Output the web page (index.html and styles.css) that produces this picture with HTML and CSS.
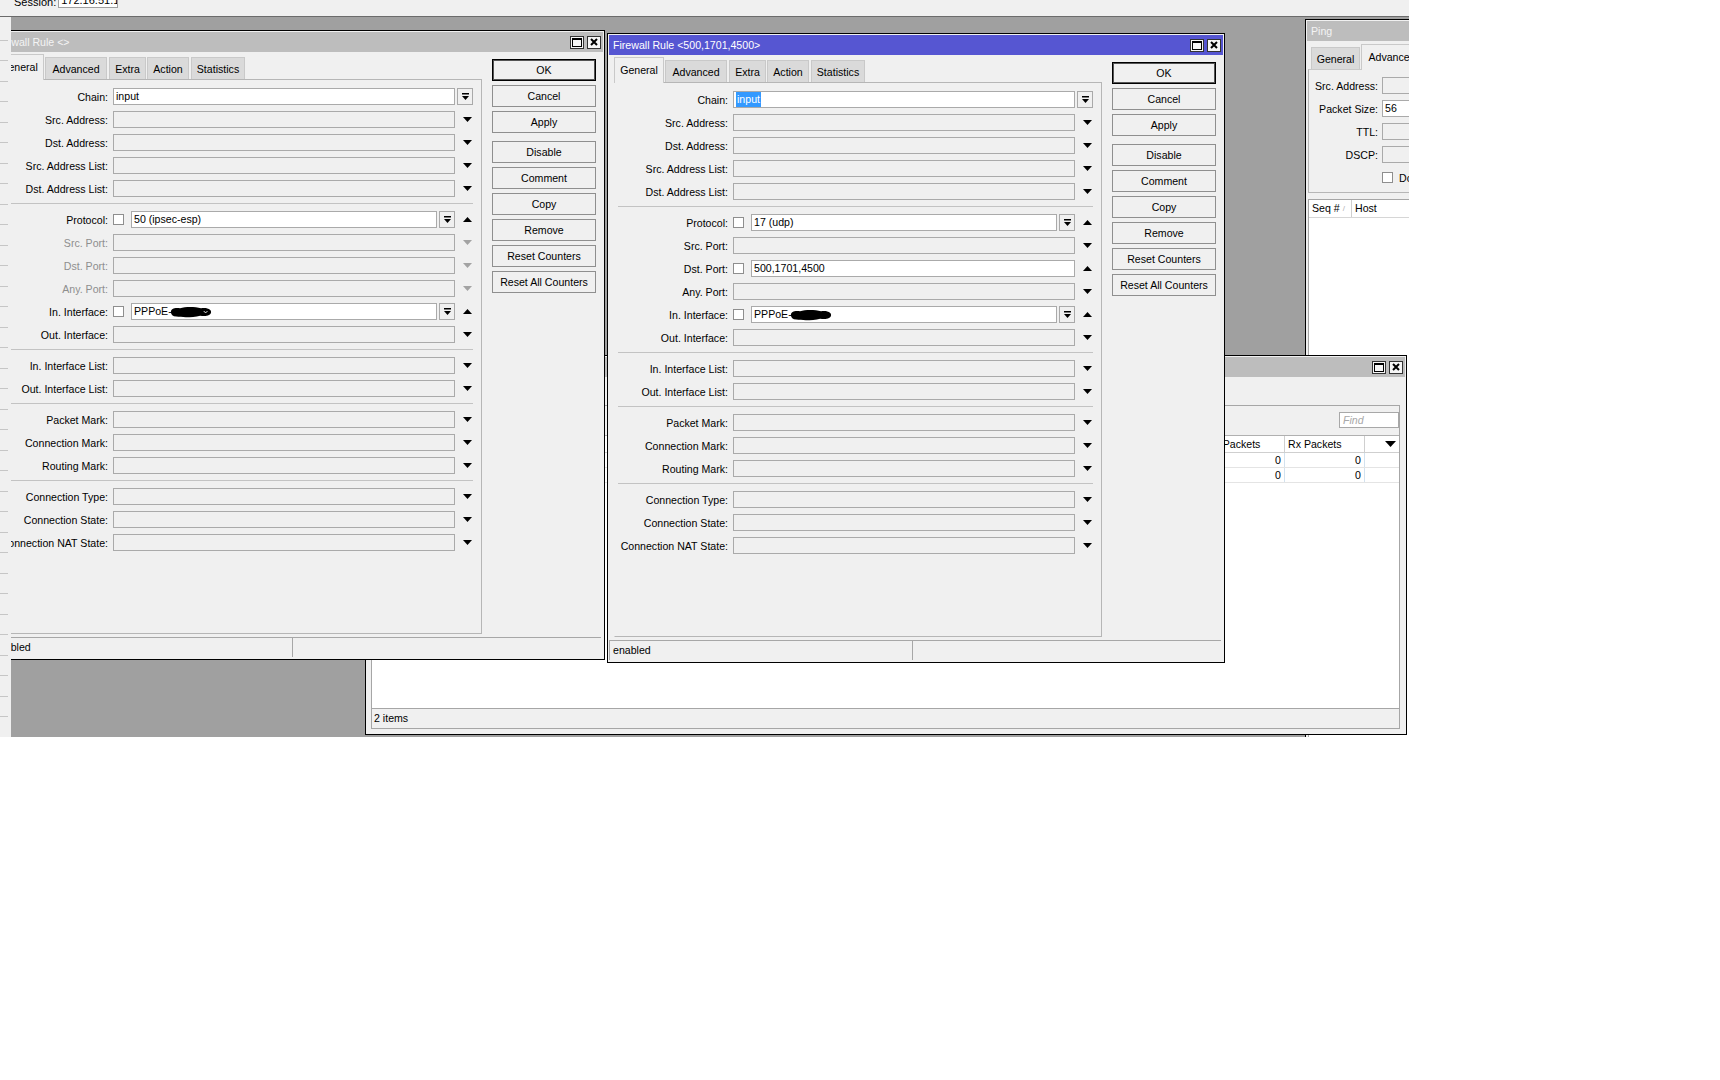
FILE: index.html
```html
<!DOCTYPE html>
<html>
<head>
<meta charset="utf-8">
<title>WinBox</title>
<link rel="stylesheet" href="styles.css">
</head>
<body>
<div class="screen">
  <div class="topbar">
    <div class="session"><span class="sess-lbl">Session:</span><span class="sess-box">172.16.51.1</span></div>
  </div>
  <div class="main">
    <div class="sidebar"></div>
    <div class="desktop">

      <!-- Ping window -->
      <div class="win ping">
        <div class="titlebar"><span class="tb-title">Ping</span></div>
        <div class="ping-body">
          <div class="ptabs">
            <div class="tab t-pgen">General</div>
            <div class="tab sel t-padv">Advanced</div>
          </div>
          <div class="ppanel">
            <div class="row"><span class="plbl">Src. Address:</span><div class="pinp"></div></div>
            <div class="row"><span class="plbl">Packet Size:</span><div class="pinp val">56</div></div>
            <div class="row"><span class="plbl">TTL:</span><div class="pinp"></div></div>
            <div class="row"><span class="plbl">DSCP:</span><div class="pinp"></div></div>
            <div class="row"><span class="plbl"></span><span class="cb pcb"></span><span>Don't Fragment</span></div>
          </div>
          <div class="plist">
            <div class="phead"><span class="th">Seq # <span class="sort">/</span></span><span class="th">Host</span><span class="th"></span></div>
          </div>
        </div>
      </div>

      <!-- List window (behind) -->
      <div class="win list">
        <div class="titlebar"><span class="tb-title">Firewall</span>
          <span class="tb-btns">
            <span class="tb-btn"><svg width="10" height="9" viewBox="0 0 10 9"><rect x="0.5" y="0.5" width="9" height="8" fill="none" stroke="#000"/><rect x="0" y="0" width="10" height="2"/></svg></span>
            <span class="tb-btn"><svg width="8" height="8" viewBox="0 0 8 8"><path d="M1 1L7 7M7 1L1 7" stroke="#000" stroke-width="2"/></svg></span>
          </span>
        </div>
        <div class="list-body">
          <div class="toolbar"></div>
          <div class="lpanel">
            <div class="findrow"><div class="find">Find</div></div>
            <div class="table">
              <div class="thead">
                <span class="th">#</span><span class="th">Tx Packets</span><span class="th">Rx Packets</span>
                <span class="th th-last"><svg class="ar" width="11" height="6" viewBox="0 0 11 6"><path d="M0 0H11L5.5 6Z"/></svg></span>
              </div>
              <div class="tr"><span class="td"></span><span class="td">0</span><span class="td">0</span><span class="td"></span></div>
              <div class="tr"><span class="td"></span><span class="td">0</span><span class="td">0</span><span class="td"></span></div>
            </div>
            <div class="lstatus">2 items</div>
          </div>
        </div>
      </div>

      <!-- Left firewall rule window (inactive) -->
      <div class="win fw fw-left">
        <div class="titlebar"><span class="tb-title">Firewall Rule &lt;&gt;</span>
          <span class="tb-btns">
            <span class="tb-btn"><svg width="10" height="9" viewBox="0 0 10 9"><rect x="0.5" y="0.5" width="9" height="8" fill="none" stroke="#000"/><rect x="0" y="0" width="10" height="2"/></svg></span>
            <span class="tb-btn"><svg width="8" height="8" viewBox="0 0 8 8"><path d="M1 1L7 7M7 1L1 7" stroke="#000" stroke-width="2"/></svg></span>
          </span>
        </div>
        <div class="fw-body">
          <div class="fw-main">
            <div class="tabs">
              <div class="tab sel t-gen">General</div>
              <div class="tab t-adv">Advanced</div>
              <div class="tab t-ext">Extra</div>
              <div class="tab t-act">Action</div>
              <div class="tab t-sta">Statistics</div>
            </div>
            <div class="panel">
              <div class="row"><span class="lbl">Chain:</span><div class="ctl"><div class="inp val">input</div></div><div class="side bs"><span class="dd"><svg width="9" height="9" viewBox="0 0 9 9"><path d="M1 1H8V2.5H1Z M1 4H8L4.5 8Z"/></svg></span></div></div>
              <div class="row"><span class="lbl">Src. Address:</span><div class="ctl"><div class="inp"></div></div><div class="side"><svg class="ar" width="9" height="5" viewBox="0 0 9 5"><path d="M0 0H9L4.5 5Z"/></svg></div></div>
              <div class="row"><span class="lbl">Dst. Address:</span><div class="ctl"><div class="inp"></div></div><div class="side"><svg class="ar" width="9" height="5" viewBox="0 0 9 5"><path d="M0 0H9L4.5 5Z"/></svg></div></div>
              <div class="row"><span class="lbl">Src. Address List:</span><div class="ctl"><div class="inp"></div></div><div class="side"><svg class="ar" width="9" height="5" viewBox="0 0 9 5"><path d="M0 0H9L4.5 5Z"/></svg></div></div>
              <div class="row"><span class="lbl">Dst. Address List:</span><div class="ctl"><div class="inp"></div></div><div class="side"><svg class="ar" width="9" height="5" viewBox="0 0 9 5"><path d="M0 0H9L4.5 5Z"/></svg></div></div>
              <div class="sep"></div>
              <div class="row"><span class="lbl">Protocol:</span><div class="ctl"><span class="cb"></span><div class="inp val">50 (ipsec-esp)</div><span class="dd"><svg width="9" height="9" viewBox="0 0 9 9"><path d="M1 1H8V2.5H1Z M1 4H8L4.5 8Z"/></svg></span></div><div class="side"><svg class="ar" width="9" height="5" viewBox="0 0 9 5"><path d="M0 5H9L4.5 0Z"/></svg></div></div>
              <div class="row"><span class="lbl dis">Src. Port:</span><div class="ctl"><div class="inp"></div></div><div class="side"><svg class="ar dis" width="9" height="5" viewBox="0 0 9 5"><path d="M0 0H9L4.5 5Z"/></svg></div></div>
              <div class="row"><span class="lbl dis">Dst. Port:</span><div class="ctl"><div class="inp"></div></div><div class="side"><svg class="ar dis" width="9" height="5" viewBox="0 0 9 5"><path d="M0 0H9L4.5 5Z"/></svg></div></div>
              <div class="row"><span class="lbl dis">Any. Port:</span><div class="ctl"><div class="inp"></div></div><div class="side"><svg class="ar dis" width="9" height="5" viewBox="0 0 9 5"><path d="M0 0H9L4.5 5Z"/></svg></div></div>
              <div class="row"><span class="lbl">In. Interface:</span><div class="ctl"><span class="cb"></span><div class="inp val">PPPoE-<svg class="blob" width="42" height="14" viewBox="0 0 46 14"><path d="M1 7C1 3 6 2 11 3C17 1 27 1 34 3C40 2 45 4 45 7C45 11 39 12 33 11C25 13 14 13 7 12C3 12 1 10 1 7Z"/><path d="M37 6L39 8L41 6" stroke="#fff" stroke-width="1" fill="none"/></svg></div><span class="dd"><svg width="9" height="9" viewBox="0 0 9 9"><path d="M1 1H8V2.5H1Z M1 4H8L4.5 8Z"/></svg></span></div><div class="side"><svg class="ar" width="9" height="5" viewBox="0 0 9 5"><path d="M0 5H9L4.5 0Z"/></svg></div></div>
              <div class="row"><span class="lbl">Out. Interface:</span><div class="ctl"><div class="inp"></div></div><div class="side"><svg class="ar" width="9" height="5" viewBox="0 0 9 5"><path d="M0 0H9L4.5 5Z"/></svg></div></div>
              <div class="sep"></div>
              <div class="row"><span class="lbl">In. Interface List:</span><div class="ctl"><div class="inp"></div></div><div class="side"><svg class="ar" width="9" height="5" viewBox="0 0 9 5"><path d="M0 0H9L4.5 5Z"/></svg></div></div>
              <div class="row"><span class="lbl">Out. Interface List:</span><div class="ctl"><div class="inp"></div></div><div class="side"><svg class="ar" width="9" height="5" viewBox="0 0 9 5"><path d="M0 0H9L4.5 5Z"/></svg></div></div>
              <div class="sep"></div>
              <div class="row"><span class="lbl">Packet Mark:</span><div class="ctl"><div class="inp"></div></div><div class="side"><svg class="ar" width="9" height="5" viewBox="0 0 9 5"><path d="M0 0H9L4.5 5Z"/></svg></div></div>
              <div class="row"><span class="lbl">Connection Mark:</span><div class="ctl"><div class="inp"></div></div><div class="side"><svg class="ar" width="9" height="5" viewBox="0 0 9 5"><path d="M0 0H9L4.5 5Z"/></svg></div></div>
              <div class="row"><span class="lbl">Routing Mark:</span><div class="ctl"><div class="inp"></div></div><div class="side"><svg class="ar" width="9" height="5" viewBox="0 0 9 5"><path d="M0 0H9L4.5 5Z"/></svg></div></div>
              <div class="sep"></div>
              <div class="row"><span class="lbl">Connection Type:</span><div class="ctl"><div class="inp"></div></div><div class="side"><svg class="ar" width="9" height="5" viewBox="0 0 9 5"><path d="M0 0H9L4.5 5Z"/></svg></div></div>
              <div class="row"><span class="lbl">Connection State:</span><div class="ctl"><div class="inp"></div></div><div class="side"><svg class="ar" width="9" height="5" viewBox="0 0 9 5"><path d="M0 0H9L4.5 5Z"/></svg></div></div>
              <div class="row"><span class="lbl">Connection NAT State:</span><div class="ctl"><div class="inp"></div></div><div class="side"><svg class="ar" width="9" height="5" viewBox="0 0 9 5"><path d="M0 0H9L4.5 5Z"/></svg></div></div>
            </div>
          </div>
          <div class="fw-side">
            <div class="btn def">OK</div>
            <div class="btn">Cancel</div>
            <div class="btn">Apply</div>
            <div class="btn gap">Disable</div>
            <div class="btn">Comment</div>
            <div class="btn">Copy</div>
            <div class="btn">Remove</div>
            <div class="btn">Reset Counters</div>
            <div class="btn">Reset All Counters</div>
          </div>
        </div>
        <div class="status"><span class="seg seg1">enabled</span><span class="seg seg2"></span></div>
      </div>

      <!-- Right firewall rule window (active) -->
      <div class="win fw fw-right active">
        <div class="titlebar"><span class="tb-title">Firewall Rule &lt;500,1701,4500&gt;</span>
          <span class="tb-btns">
            <span class="tb-btn"><svg width="10" height="9" viewBox="0 0 10 9"><rect x="0.5" y="0.5" width="9" height="8" fill="none" stroke="#000"/><rect x="0" y="0" width="10" height="2"/></svg></span>
            <span class="tb-btn"><svg width="8" height="8" viewBox="0 0 8 8"><path d="M1 1L7 7M7 1L1 7" stroke="#000" stroke-width="2"/></svg></span>
          </span>
        </div>
        <div class="fw-body">
          <div class="fw-main">
            <div class="tabs">
              <div class="tab sel t-gen">General</div>
              <div class="tab t-adv">Advanced</div>
              <div class="tab t-ext">Extra</div>
              <div class="tab t-act">Action</div>
              <div class="tab t-sta">Statistics</div>
            </div>
            <div class="panel">
              <div class="row"><span class="lbl">Chain:</span><div class="ctl"><div class="inp val"><span class="hl">input</span></div></div><div class="side bs"><span class="dd"><svg width="9" height="9" viewBox="0 0 9 9"><path d="M1 1H8V2.5H1Z M1 4H8L4.5 8Z"/></svg></span></div></div>
              <div class="row"><span class="lbl">Src. Address:</span><div class="ctl"><div class="inp"></div></div><div class="side"><svg class="ar" width="9" height="5" viewBox="0 0 9 5"><path d="M0 0H9L4.5 5Z"/></svg></div></div>
              <div class="row"><span class="lbl">Dst. Address:</span><div class="ctl"><div class="inp"></div></div><div class="side"><svg class="ar" width="9" height="5" viewBox="0 0 9 5"><path d="M0 0H9L4.5 5Z"/></svg></div></div>
              <div class="row"><span class="lbl">Src. Address List:</span><div class="ctl"><div class="inp"></div></div><div class="side"><svg class="ar" width="9" height="5" viewBox="0 0 9 5"><path d="M0 0H9L4.5 5Z"/></svg></div></div>
              <div class="row"><span class="lbl">Dst. Address List:</span><div class="ctl"><div class="inp"></div></div><div class="side"><svg class="ar" width="9" height="5" viewBox="0 0 9 5"><path d="M0 0H9L4.5 5Z"/></svg></div></div>
              <div class="sep"></div>
              <div class="row"><span class="lbl">Protocol:</span><div class="ctl"><span class="cb"></span><div class="inp val">17 (udp)</div><span class="dd"><svg width="9" height="9" viewBox="0 0 9 9"><path d="M1 1H8V2.5H1Z M1 4H8L4.5 8Z"/></svg></span></div><div class="side"><svg class="ar" width="9" height="5" viewBox="0 0 9 5"><path d="M0 5H9L4.5 0Z"/></svg></div></div>
              <div class="row"><span class="lbl">Src. Port:</span><div class="ctl"><div class="inp"></div></div><div class="side"><svg class="ar" width="9" height="5" viewBox="0 0 9 5"><path d="M0 0H9L4.5 5Z"/></svg></div></div>
              <div class="row"><span class="lbl">Dst. Port:</span><div class="ctl"><span class="cb"></span><div class="inp val">500,1701,4500</div></div><div class="side"><svg class="ar" width="9" height="5" viewBox="0 0 9 5"><path d="M0 5H9L4.5 0Z"/></svg></div></div>
              <div class="row"><span class="lbl">Any. Port:</span><div class="ctl"><div class="inp"></div></div><div class="side"><svg class="ar" width="9" height="5" viewBox="0 0 9 5"><path d="M0 0H9L4.5 5Z"/></svg></div></div>
              <div class="row"><span class="lbl">In. Interface:</span><div class="ctl"><span class="cb"></span><div class="inp val">PPPoE-<svg class="blob" width="42" height="14" viewBox="0 0 46 14"><path d="M1 7C1 3 6 2 11 3C17 1 27 1 34 3C40 2 45 4 45 7C45 11 39 12 33 11C25 13 14 13 7 12C3 12 1 10 1 7Z"/></svg></div><span class="dd"><svg width="9" height="9" viewBox="0 0 9 9"><path d="M1 1H8V2.5H1Z M1 4H8L4.5 8Z"/></svg></span></div><div class="side"><svg class="ar" width="9" height="5" viewBox="0 0 9 5"><path d="M0 5H9L4.5 0Z"/></svg></div></div>
              <div class="row"><span class="lbl">Out. Interface:</span><div class="ctl"><div class="inp"></div></div><div class="side"><svg class="ar" width="9" height="5" viewBox="0 0 9 5"><path d="M0 0H9L4.5 5Z"/></svg></div></div>
              <div class="sep"></div>
              <div class="row"><span class="lbl">In. Interface List:</span><div class="ctl"><div class="inp"></div></div><div class="side"><svg class="ar" width="9" height="5" viewBox="0 0 9 5"><path d="M0 0H9L4.5 5Z"/></svg></div></div>
              <div class="row"><span class="lbl">Out. Interface List:</span><div class="ctl"><div class="inp"></div></div><div class="side"><svg class="ar" width="9" height="5" viewBox="0 0 9 5"><path d="M0 0H9L4.5 5Z"/></svg></div></div>
              <div class="sep"></div>
              <div class="row"><span class="lbl">Packet Mark:</span><div class="ctl"><div class="inp"></div></div><div class="side"><svg class="ar" width="9" height="5" viewBox="0 0 9 5"><path d="M0 0H9L4.5 5Z"/></svg></div></div>
              <div class="row"><span class="lbl">Connection Mark:</span><div class="ctl"><div class="inp"></div></div><div class="side"><svg class="ar" width="9" height="5" viewBox="0 0 9 5"><path d="M0 0H9L4.5 5Z"/></svg></div></div>
              <div class="row"><span class="lbl">Routing Mark:</span><div class="ctl"><div class="inp"></div></div><div class="side"><svg class="ar" width="9" height="5" viewBox="0 0 9 5"><path d="M0 0H9L4.5 5Z"/></svg></div></div>
              <div class="sep"></div>
              <div class="row"><span class="lbl">Connection Type:</span><div class="ctl"><div class="inp"></div></div><div class="side"><svg class="ar" width="9" height="5" viewBox="0 0 9 5"><path d="M0 0H9L4.5 5Z"/></svg></div></div>
              <div class="row"><span class="lbl">Connection State:</span><div class="ctl"><div class="inp"></div></div><div class="side"><svg class="ar" width="9" height="5" viewBox="0 0 9 5"><path d="M0 0H9L4.5 5Z"/></svg></div></div>
              <div class="row"><span class="lbl">Connection NAT State:</span><div class="ctl"><div class="inp"></div></div><div class="side"><svg class="ar" width="9" height="5" viewBox="0 0 9 5"><path d="M0 0H9L4.5 5Z"/></svg></div></div>
            </div>
          </div>
          <div class="fw-side">
            <div class="btn def">OK</div>
            <div class="btn">Cancel</div>
            <div class="btn">Apply</div>
            <div class="btn gap">Disable</div>
            <div class="btn">Comment</div>
            <div class="btn">Copy</div>
            <div class="btn">Remove</div>
            <div class="btn">Reset Counters</div>
            <div class="btn">Reset All Counters</div>
          </div>
        </div>
        <div class="status"><span class="seg seg1">enabled</span><span class="seg seg2"></span></div>
      </div>

    </div>
  </div>
</div>
</body>
</html>
```
FILE: styles.css
```css
* { box-sizing: border-box; }
html, body { margin: 0; padding: 0; background: #fff; }
body {
  font-family: "Liberation Sans", Arial, sans-serif;
  font-size: 10.6px;
  color: #000;
}

.screen {
  width: 1409px;
  height: 737px;
  display: flex;
  flex-direction: column;
  overflow: hidden;
  background: #f0f0f0;
}

/* top session bar */
.topbar {
  flex: none;
  height: 17px;
  border-bottom: 1px solid #6b6b6b;
  background: #f0f0f0;
  display: flex;
  align-items: flex-end;
  padding: 0 0 8px 14px;
}
.session { display: flex; align-items: flex-end; }
.sess-lbl { font-size: 11px; line-height: 12px; margin-right: 2px; }
.sess-box {
  width: 60px;
  height: 17px;
  border: 1px solid #a0a0a0;
  background: #fff;
  padding: 2px 0 0 2px;
  line-height: 13px;
  font-size: 11px;
  white-space: nowrap;
  overflow: hidden;
}

.main { flex: none; height: 720px; display: flex; }
.sidebar {
  width: 11px;
  flex: none;
  background-color: #f0f0f0;
  background-image: repeating-linear-gradient(to bottom, transparent 0, transparent 19.5px, #c6c6c6 19.5px, #c6c6c6 20.5px);
  background-size: 8px 100%;
  background-repeat: no-repeat;
  background-position: 0 3px;
}
.desktop {
  flex: 1;
  position: relative;
  overflow: hidden;
  background: #a0a0a0;
}

/* generic window */
.win {
  position: absolute;
  display: flex;
  flex-direction: column;
  background: #f0f0f0;
  border: 1px solid #000;
  padding: 1px;
}
.titlebar {
  flex: none;
  height: 20px;
  display: flex;
  align-items: center;
  padding-left: 4px;
  background: #bdbdbd;
  color: #f4f4f4;
  white-space: nowrap;
  overflow: hidden;
}
.active .titlebar { background: #5656d2; color: #fff; }
.tb-title { flex: 1; }
.tb-btns { display: flex; gap: 3px; margin-right: 2px; }
.tb-btn {
  width: 14px;
  height: 13px;
  border: 1px solid #333;
  background: #f6f6f6;
  display: flex;
  align-items: center;
  justify-content: center;
}

/* firewall rule windows */
.fw { width: 618px; height: 630px; }
.fw-left { left: -24px; top: 13px; z-index: 3; }
.fw-right { left: 596px; top: 16px; z-index: 4; }

.fw-body { flex: 1; min-height: 0; display: flex; padding: 2px 0 0 5px; }
.fw-main { width: 488px; display: flex; flex-direction: column; }

.tabs {
  flex: none;
  height: 25px;
  display: flex;
  align-items: flex-end;
  position: relative;
  z-index: 1;
}
.tab {
  flex: none;
  height: 22px;
  margin-right: 1px;
  background: #dadada;
  border: 1px solid #c9c9c9;
  border-bottom: none;
  display: flex;
  align-items: center;
  justify-content: center;
  white-space: nowrap;
}
.tab.sel {
  height: 26px;
  margin-bottom: -1px;
  background: #f0f0f0;
  padding-bottom: 1px;
}
.t-gen { width: 50px; }
.t-adv { width: 62px; }
.t-ext { width: 37px; margin-left: 1px; }
.t-act { width: 42px; }
.t-sta { width: 54px; margin-left: 1px; }

.panel {
  flex: 1;
  border: 1px solid #b6b6b6;
  border-left-color: #f0f0f0;
  padding-top: 8px;
}

.row {
  display: flex;
  align-items: center;
  height: 17px;
  margin-bottom: 6px;
  white-space: nowrap;
}
.lbl { flex: none; width: 113px; text-align: right; }
.lbl.dis { color: #8e8e8e; }
.ctl { flex: none; width: 342px; height: 17px; margin-left: 5px; display: flex; align-items: center; }
.side { flex: none; width: 24px; height: 17px; display: flex; align-items: center; justify-content: center; }
.side.bs { justify-content: flex-start; padding-left: 2px; }
.inp {
  flex: 1;
  min-width: 0;
  height: 17px;
  border: 1px solid #aaaaaa;
  background: #f0f0f0;
  padding-left: 2px;
  line-height: 15px;
  white-space: nowrap;
  overflow: hidden;
  display: flex;
  align-items: center;
}
.inp.val { background: #fff; }
.hl { background: #3399ff; color: #fff; padding: 0 1px; line-height: 15px; }
.cb {
  flex: none;
  width: 11px;
  height: 11px;
  border: 1px solid #8e8e8e;
  background: #fff;
  margin-right: 7px;
}
.dd {
  flex: none;
  width: 16px;
  height: 17px;
  border: 1px solid #a9a9a9;
  background: #f0f0f0;
  display: flex;
  align-items: center;
  justify-content: center;
}
.ctl .dd { margin-left: 2px; }
.ar { fill: #000; display: block; }
.ar.dis { fill: #a3a3a3; }
.blob { fill: #000; margin-left: -2px; display: block; }

.sep { height: 1px; background: #c3c3c3; margin: 0 8px 7px 3px; }

.fw-side {
  flex: none;
  width: 104px;
  margin-left: 10px;
  padding-top: 5px;
  display: flex;
  flex-direction: column;
  gap: 4px;
}
.btn {
  height: 22px;
  border: 1px solid #8f8f8f;
  background: #f0f0f0;
  display: flex;
  align-items: center;
  justify-content: center;
  white-space: nowrap;
}
.btn.def { border-color: #000; box-shadow: inset 0 0 0 1px #555; }
.btn.gap { margin-top: 4px; }

.status { flex: none; height: 20px; margin: 3px 0 1px; display: flex; }
.seg {
  border-top: 1px solid #a7a7a7;
  border-left: 1px solid #a7a7a7;
  padding-left: 3px;
  line-height: 19px;
  white-space: nowrap;
}
.seg1 { width: 303px; }
.seg2 { flex: 1; margin-right: 2px; }

/* list window */
.list { left: 354px; top: 338px; width: 1042px; height: 380px; z-index: 2; }
.list-body { flex: 1; min-height: 0; display: flex; flex-direction: column; padding: 0 5px 4px 4px; }
.toolbar { flex: none; height: 28px; }
.lpanel { flex: 1; min-height: 0; border: 1px solid #a6a6a6; display: flex; flex-direction: column; }
.findrow { flex: none; height: 29px; display: flex; justify-content: flex-end; align-items: flex-start; padding-top: 6px; }
.find {
  width: 60px;
  height: 16px;
  border: 1px solid #a8a8a8;
  background: #fff;
  color: #a8a8a8;
  font-style: italic;
  padding-left: 3px;
  line-height: 14px;
}
.table { flex: 1; background: #fff; border-top: 1px solid #b0b0b0; }
.thead, .tr { display: grid; grid-template-columns: 1fr 80px 80px 34px; }
.thead { height: 17px; border-bottom: 1px solid #cfcfcf; }
.th { border-right: 1px solid #cfcfcf; padding-left: 3px; line-height: 16px; white-space: nowrap; overflow: hidden; }
.th-last { border-right: none; display: flex; align-items: center; justify-content: flex-end; padding-right: 3px; }
.tr { height: 15px; border-bottom: 1px solid #e4e4e4; }
.td { text-align: right; padding-right: 3px; border-right: 1px solid #d3e2ef; line-height: 14px; }
.td:last-child { border-right: none; }
.lstatus { flex: none; height: 20px; border-top: 1px solid #a6a6a6; background: #f0f0f0; padding-left: 2px; line-height: 19px; }

/* ping window */
.ping { left: 1294px; top: 2px; width: 320px; height: 800px; z-index: 1; }
.ping-body { flex: 1; display: flex; flex-direction: column; padding-left: 1px; }
.ptabs { flex: none; height: 26px; margin-top: 2px; display: flex; align-items: flex-end; padding-left: 3px; position: relative; z-index: 1; }
.t-pgen { width: 49px; }
.t-padv { width: 62px; }
.ppanel { flex: none; border-top: 1px solid #c9c9c9; border-left: 1px solid #b6b6b6; border-bottom: 1px solid #b6b6b6; padding-top: 7px; }
.plbl { flex: none; width: 69px; text-align: right; margin-right: 4px; }
.pinp { width: 200px; height: 17px; border: 1px solid #aaaaaa; background: #f0f0f0; padding-left: 2px; line-height: 15px; }
.pinp.val { background: #fff; }
.pcb { margin-right: 6px; }
.plist { flex: 1; margin-top: 6px; border: 1px solid #a6a6a6; border-right: none; background: #fff; }
.phead { display: grid; grid-template-columns: 43px 120px 1fr; height: 18px; border-bottom: 1px solid #d6d6d6; }
.phead .th { line-height: 17px; }
.sort { color: #b0b0b0; font-size: 8px; vertical-align: top; }
```
